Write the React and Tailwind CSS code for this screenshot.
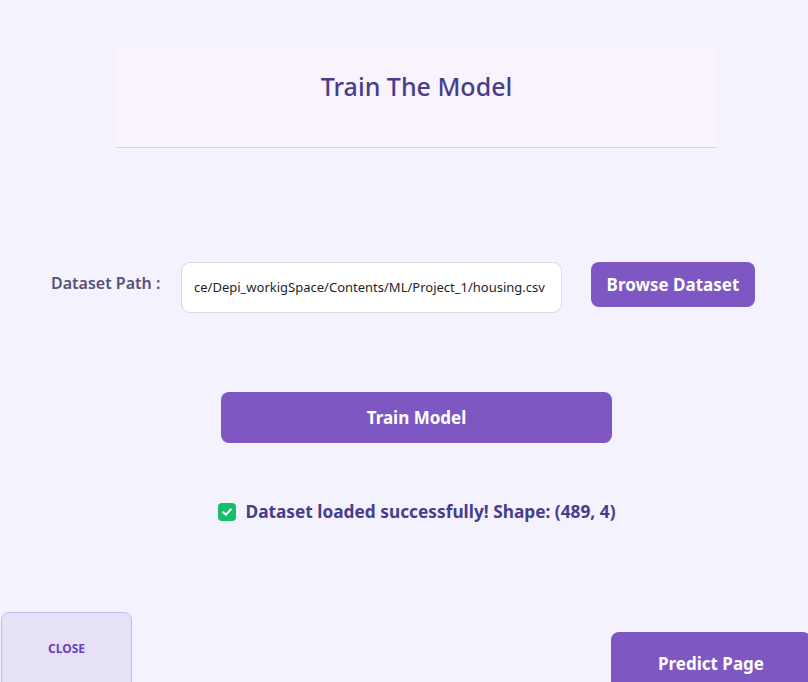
export default function App() {
    const font = { fontFamily: '"Noto Sans", "Open Sans", sans-serif' };

    return (
        <div className="w-[808px] h-[682px] overflow-hidden bg-[#f4f2fd] flex flex-col" style={font}>
            {/* header panel */}
            <div className="mt-[47px] ml-[116px] w-[601px] h-[101px] bg-[#f8f3fd] border-b border-[#d8d2e6] flex justify-center pt-[22px]">
                <h1 className="text-[25px] leading-[34px] text-[#483d8b] font-medium">Train The Model</h1>
            </div>

            {/* dataset row */}
            <div className="mt-[114px] flex items-start">
                <label className="ml-[51px] mt-[9px] w-[130px] text-[16px] font-semibold text-[#5a4f78]">
                    Dataset Path :
                </label>
                <div className="w-[381px] h-[51px] bg-white border border-[#dcd5ee] rounded-[9px] flex items-center px-[12px] overflow-hidden whitespace-nowrap">
                    <span className="text-[13px] text-[#1f1f1f]">ce/Depi_workigSpace/Contents/ML/Project_1/housing.csv</span>
                </div>
                <button className="ml-[29px] w-[164px] h-[45px] bg-[#7e57c2] rounded-[8px] text-white text-[17px] font-bold">
                    Browse Dataset
                </button>
            </div>

            {/* train */}
            <button className="mt-[79px] ml-[221px] w-[391px] h-[51px] bg-[#7e57c2] rounded-[8px] text-white text-[17px] font-bold">
                Train Model
            </button>

            {/* status */}
            <div className="mt-[56px] flex items-center justify-center gap-[9px] pl-[26px]">
                <span className="w-[18px] h-[18px] rounded-[4px] bg-[#16c06a] flex items-center justify-center">
                    <svg width="12" height="12" viewBox="0 0 12 12" fill="none">
                        <path d="M2.2 6.2 L4.9 8.8 L9.8 3.4" stroke="white" strokeWidth="2" strokeLinecap="round" strokeLinejoin="round" />
                    </svg>
                </span>
                <p className="text-[17.3px] font-bold text-[#483d8b]">Dataset loaded successfully! Shape: (489, 4)</p>
            </div>

            {/* bottom buttons */}
            <div className="mt-auto flex justify-between items-start h-[70px]">
                <button className="ml-[1px] w-[131px] h-[90px] bg-[#e7e1f7] border border-[#c6b9ea] rounded-[8px] text-[12px] font-bold text-[#6a3fc0] pb-[17px]">
                    CLOSE
                </button>
                <button className="mt-[20px] w-[200px] -mr-[3px] h-[70px] bg-[#7e57c2] rounded-t-[8px] text-white text-[17px] font-bold pb-[6px]">
                    Predict Page
                </button>
            </div>
        </div>
    );
}
